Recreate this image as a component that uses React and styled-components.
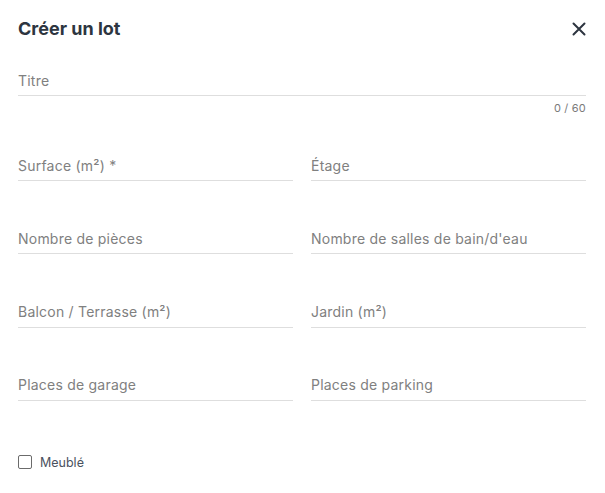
import React from "react";
import styled, { createGlobalStyle } from "styled-components";

const Global = createGlobalStyle`
  html, body { margin: 0; padding: 0; background: #fff; }
  body { font-family: Inter, "Noto Sans", sans-serif; }
  * { box-sizing: border-box; }
`;

const Dialog = styled.div`
  width: 605px;
  padding: 18px 19px 0 18px;
  display: flex;
  flex-direction: column;
`;

const Header = styled.div`
  display: flex;
  align-items: center;
  justify-content: space-between;
  height: 22px;
  margin-bottom: 25px;
`;

const Title = styled.h2`
  margin: 0;
  font-size: 18px;
  font-weight: 700;
  color: #2d3540;
  line-height: 22px;
`;

const CloseButton = styled.button`
  border: 0;
  background: none;
  padding: 0;
  width: 16px;
  height: 16px;
  margin-right: -1px;
  display: flex;
  align-items: center;
  justify-content: center;
  color: #2d3540;
  cursor: pointer;
`;

const Field = styled.label`
  display: block;
  height: 31px;
  border-bottom: 1px solid #dedede;
`;

const Input = styled.input`
  width: 100%;
  height: 30px;
  border: 0;
  outline: none;
  padding: 0;
  font-family: inherit;
  font-size: 14px;
  letter-spacing: 0.22px;
  color: #2d3540;
  background: transparent;
  &::placeholder { color: #808080; }
`;

const Counter = styled.div`
  text-align: right;
  font-size: 11px;
  line-height: 13px;
  color: #7a7a7a;
  margin-top: 6px;
  margin-bottom: 35px;
  letter-spacing: 0.2px;
`;

const Grid = styled.div`
  display: grid;
  grid-template-columns: 1fr 1fr;
  column-gap: 18px;
  row-gap: 42.33px;
`;

const CheckRow = styled.label`
  display: flex;
  align-items: center;
  gap: 8px;
  margin-top: 54px;
  font-size: 12.5px;
  color: #4a5260;
`;

const Box = styled.span`
  width: 14px;
  height: 14px;
  border: 1.5px solid #6b6b6b;
  border-radius: 2px;
  display: inline-block;
`;

const fields = [
  "Surface (m²) *",
  "Étage",
  "Nombre de pièces",
  "Nombre de salles de bain/d'eau",
  "Balcon / Terrasse (m²)",
  "Jardin (m²)",
  "Places de garage",
  "Places de parking",
];

export default function App() {
  return (
    <>
      <Global />
      <Dialog>
        <Header>
          <Title>Créer un lot</Title>
          <CloseButton aria-label="Fermer">
            <svg width="14" height="14" viewBox="0 0 14 14">
              <path d="M1.5 1.5 L12.5 12.5 M12.5 1.5 L1.5 12.5" stroke="currentColor" strokeWidth="2" strokeLinecap="round" />
            </svg>
          </CloseButton>
        </Header>
        <Field>
          <Input placeholder="Titre" />
        </Field>
        <Counter>0 / 60</Counter>
        <Grid>
          {fields.map((f) => (
            <Field key={f}>
              <Input placeholder={f} />
            </Field>
          ))}
        </Grid>
        <CheckRow>
          <Box />
          Meublé
        </CheckRow>
      </Dialog>
    </>
  );
}
